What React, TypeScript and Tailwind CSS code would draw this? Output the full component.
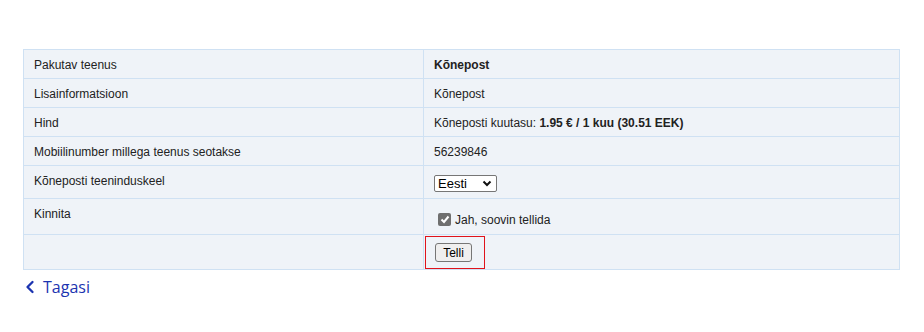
import { ChevronLeft } from 'lucide-react'

const rows = [
  { label: 'Pakutav teenus', value: <b>Kõnepost</b> },
  { label: 'Lisainformatsioon', value: 'Kõnepost' },
  {
    label: 'Hind',
    value: (
      <>
        Kõneposti kuutasu: <b>1.95 € / 1 kuu (30.51 EEK)</b>
      </>
    ),
  },
  { label: 'Mobiilinumber millega teenus seotakse', value: '56239846' },
]

const cell = 'border border-[#cfe1f3] px-[10px] pt-[7px] pb-[5px] align-top leading-[16px]'

export default function App() {
  return (
    <div className="min-h-screen bg-white pt-[49px] pl-[23px] pr-[24px] font-['Liberation_Sans',Arial,sans-serif] text-[12px] text-[#222]">
      <table className="w-[877px] table-fixed border-collapse bg-[#eff3f8]">
        <colgroup>
          <col className="w-[400px]" />
          <col />
        </colgroup>
        <tbody>
          {rows.map((r) => (
            <tr key={r.label}>
              <td className={cell}>{r.label}</td>
              <td className={cell}>{r.value}</td>
            </tr>
          ))}
          <tr>
            <td className={cell + ' h-[33px]'}>Kõneposti teeninduskeel</td>
            <td className="border border-[#cfe1f3] px-[10px] pt-[9px] pb-[5px] align-top">
              <div className="flex h-[17px] w-[63px] items-center justify-between rounded-[2px] border border-[#767676] bg-white pl-[3px] pr-[4px] text-[13px] leading-none text-black">
                <span>Eesti</span>
                <svg width="10" height="7" viewBox="0 0 10 7">
                  <path d="M1.5 1.5 L5 5 L8.5 1.5" fill="none" stroke="#111" strokeWidth="2" />
                </svg>
              </div>
            </td>
          </tr>
          <tr>
            <td className={cell + ' h-[36px]'}>Kinnita</td>
            <td className="border border-[#cfe1f3] px-[14px] pt-[11px] pb-[4px] align-top">
              <label className="flex items-center gap-[4px] leading-[16px]">
                <span className="flex h-[13px] w-[13px] items-center justify-center rounded-[2px] bg-[#6f6f6f]">
                  <svg width="10" height="9" viewBox="0 0 10 9">
                    <path d="M1.5 4.5 L4 7 L8.5 1.5" fill="none" stroke="#fff" strokeWidth="2" />
                  </svg>
                </span>
                <span className="pt-[2px]">Jah, soovin tellida</span>
              </label>
            </td>
          </tr>
          <tr>
            <td className="h-[35px] border border-[#cfe1f3]" />
            <td className="border border-[#cfe1f3] pl-[1px] pt-[1px] pb-0 align-top">
              <div className="h-[33px] w-[60px] border border-[#e0131b] pl-[9px] pt-[6px]">
                <button className="flex h-[19px] w-[37px] items-center justify-center rounded-[3px] border border-[#767676] bg-[#efefef] text-[12px] leading-none text-black">
                  Telli
                </button>
              </div>
            </td>
          </tr>
        </tbody>
      </table>
      <a href="#" className="mt-[6px] flex items-center gap-[3px] font-['Open_Sans',sans-serif] text-[16px] leading-[22px] text-[#1c34b0]">
        <ChevronLeft size={20} strokeWidth={2.8} className="-ml-[3px]" />
        Tagasi
      </a>
    </div>
  )
}
